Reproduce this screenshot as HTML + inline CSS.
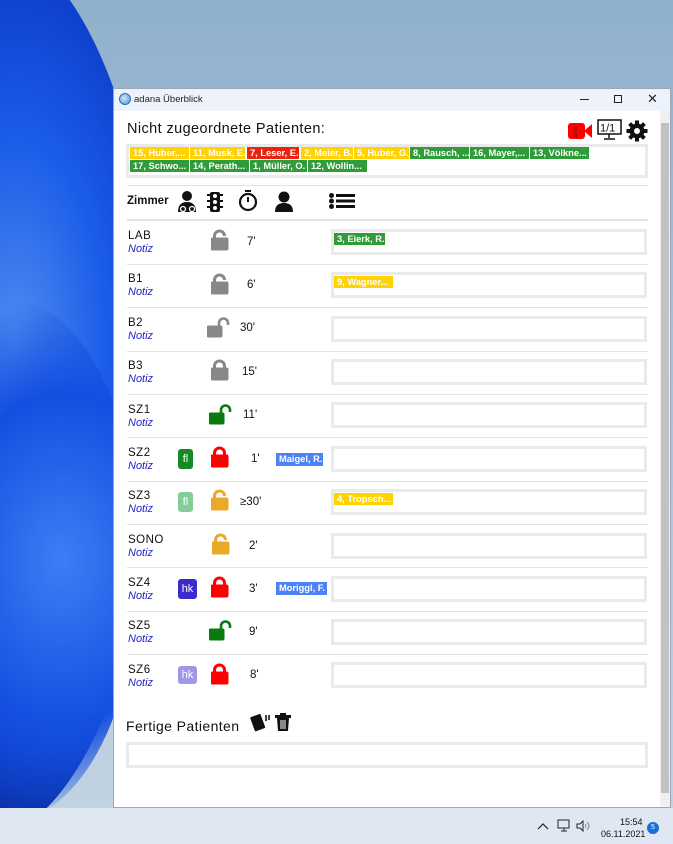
<!DOCTYPE html>
<html><head><meta charset="utf-8"><style>
*{margin:0;padding:0;box-sizing:border-box}
body{width:673px;height:844px;overflow:hidden;position:relative;font-family:"Liberation Sans","DejaVu Sans",sans-serif;
background:linear-gradient(180deg,#8fb0cc 0%,#a9c2d8 40%,#c3d3e2 100%)}
.bloom{position:absolute;left:-200px;top:-60px;width:360px;height:900px;border-radius:50%;
background:radial-gradient(ellipse at 60% 45%,#4f8cf0 0%,#1a5ce8 30%,#0c3cc8 55%,#0a2a90 75%,rgba(10,40,140,0) 78%)}
.bloom2{position:absolute;left:-120px;top:300px;width:260px;height:520px;border-radius:50%;
background:radial-gradient(ellipse at 70% 50%,#3b7ff5 0%,#1450e0 45%,rgba(20,60,200,0) 72%)}
.task{position:absolute;left:0;top:808px;width:673px;height:36px;background:#dfe8f2}
.win{position:absolute;left:113px;top:88px;width:558px;height:720px;background:#fff;border:1px solid #9aa8b8}
.tbar{position:absolute;left:0;top:0;width:556px;height:22px;background:#eef3fb;font-size:9.5px;color:#222}
.sb{position:absolute;left:546px;top:22px;width:10px;height:696px;background:#f0f0f0}
.sb i{position:absolute;left:1px;top:12px;width:8px;height:670px;background:#c2c2c2}
.a{position:absolute}
.chip{position:absolute;height:12px;font-size:9.3px;font-weight:bold;color:#fff;line-height:12px;padding-left:3px;white-space:nowrap;overflow:hidden;border-right:1px solid #fff}
.y{background:#ffd200}.g{background:#2e9c38}.r{background:#e8230f}.b{background:#4c82f5}
.line{position:absolute;left:13px;width:521px;height:1px;background:#e2e2e2}
.room{position:absolute;left:14px;font-size:11.5px;color:#111;letter-spacing:.5px}
.notiz{position:absolute;left:14px;font-size:11px;color:#2222cc;font-style:italic}
.drop{position:absolute;left:217px;width:316px;height:26px;border:3px solid #eaeaea}
.tm{position:absolute;font-size:11.5px;color:#111}
.badge{position:absolute;width:16px;height:20px;border-radius:3px;color:#fff;font-size:11px;text-align:center;line-height:20px}
</style></head><body>
<div class="bloom"></div><div class="bloom2"></div>
<div class="task">
<svg class="a" style="left:537px;top:14px" width="12" height="8"><path d="M1 7L6 2L11 7" stroke="#222" fill="none" stroke-width="1.2"/></svg>
<svg class="a" style="left:557px;top:11px" width="14" height="14"><rect x="1" y="1" width="11" height="8" fill="none" stroke="#222"/><path d="M4 12h6M7 9v3" stroke="#222"/></svg>
<svg class="a" style="left:576px;top:12px" width="14" height="12"><path d="M1 4h3l3-3v10L4 8H1z" fill="none" stroke="#222"/><path d="M9 4q2 2 0 4M11 2q4 4 0 8" stroke="#888" fill="none"/></svg>
<div class="a" style="left:620px;top:9px;font-size:9px;color:#111">15:54</div>
<div class="a" style="left:601px;top:21px;font-size:9px;color:#111">06.11.2021</div>
<div class="a" style="left:647px;top:14px;width:12px;height:12px;border-radius:6px;background:#1a6fd6;color:#fff;font-size:7px;text-align:center;line-height:12px">5</div>
</div>
<div class="win">
<div class="tbar">
<div class="a" style="left:5px;top:4px;width:12px;height:12px;border-radius:6px;background:radial-gradient(circle at 40% 40%,#cfe6ff,#4d94d8);border:1px solid #2d6fb0"></div>
<div class="a" style="left:20px;top:5px">adana Überblick</div>
<div class="a" style="left:466px;top:10px;width:9px;height:1px;background:#222"></div>
<div class="a" style="left:500px;top:6px;width:8px;height:8px;border:1px solid #222"></div>
<div class="a" style="left:533px;top:2px;font-size:13px">✕</div>
</div>
<div class="sb"><i></i></div>
<div class="a" style="left:13px;top:32px;font-size:14.5px;color:#111;letter-spacing:.4px">Nicht zugeordnete Patienten:</div>
<svg class="a" style="left:454px;top:33px" width="25" height="18"><rect x="0" y="1" width="17" height="16" rx="3" fill="#f00"/><path d="M16 9L24 2V16z" fill="#f00"/><text x="6" y="9" font-size="6" fill="#600">0</text><text x="6" y="15" font-size="6" fill="#600">5</text></svg>
<svg class="a" style="left:483px;top:30px" width="26" height="22"><rect x="1" y="1" width="23" height="14" fill="#fff" stroke="#111" stroke-width="1.5"/><text x="3" y="12.5" font-size="11" fill="#111" font-family="Liberation Sans">1/1</text><path d="M12 15v4M7 20h11" stroke="#111" stroke-width="1.5"/></svg>
<svg class="a" style="left:512px;top:31px" width="22" height="22" viewBox="0 0 22 22"><g fill="#111"><circle cx="11" cy="11" r="7.5"/><g id="t"><rect x="9" y="0.5" width="4" height="5"/><rect x="9" y="16.5" width="4" height="5"/></g><use href="#t" transform="rotate(45 11 11)"/><use href="#t" transform="rotate(90 11 11)"/><use href="#t" transform="rotate(135 11 11)"/></g><circle cx="11" cy="11" r="3" fill="#fff"/></svg>
<div class="a" style="left:12px;top:55px;width:522px;height:34px;border:3px solid #eaeaea"></div>
<div class="chip y" style="left:16px;top:58px;width:60px">15, Huber,...</div>
<div class="chip y" style="left:76px;top:58px;width:56px">11, Musk, E.</div>
<div class="chip r" style="left:133px;top:58px;width:53px">7, Leser, E.</div>
<div class="chip y" style="left:187px;top:58px;width:53px">2, Meier, B.</div>
<div class="chip y" style="left:240px;top:58px;width:56px">5, Huber, G.</div>
<div class="chip g" style="left:296px;top:58px;width:60px">8, Rausch, ...</div>
<div class="chip g" style="left:356px;top:58px;width:60px">16, Mayer,...</div>
<div class="chip g" style="left:416px;top:58px;width:60px">13, Völkne...</div>
<div class="chip g" style="left:16px;top:71px;width:60px">17, Schwo...</div>
<div class="chip g" style="left:76px;top:71px;width:60px">14, Perath...</div>
<div class="chip g" style="left:136px;top:71px;width:58px">1, Müller, O.</div>
<div class="chip g" style="left:194px;top:71px;width:60px">12, Wollin...</div>
<div class="line" style="top:96px"></div>
<div class="a" style="left:13px;top:106px;font-size:11.5px;font-weight:bold;color:#111">Zimmer</div>
<svg class="a" style="left:63px;top:101px" width="22" height="24"><circle cx="10" cy="6" r="5" fill="#111"/><path d="M1 22q0-10 9-10q9 0 9 10z" fill="#111"/><circle cx="6" cy="19" r="2.5" fill="none" stroke="#fff" stroke-width="1.3"/><circle cx="15" cy="19" r="2.5" fill="none" stroke="#fff" stroke-width="1.3"/></svg>
<svg class="a" style="left:93px;top:103px" width="16" height="20"><rect x="3" y="0" width="10" height="20" rx="2" fill="#111"/><path d="M0 3h3M0 9h3M0 15h3M13 3h3M13 9h3M13 15h3" stroke="#111" stroke-width="2"/><circle cx="8" cy="4" r="2" fill="#fff"/><circle cx="8" cy="10" r="2" fill="#fff"/><circle cx="8" cy="16" r="2" fill="#fff"/></svg>
<svg class="a" style="left:124px;top:101px" width="20" height="22"><rect x="7" y="0" width="6" height="2" fill="#111"/><circle cx="10" cy="12" r="8" fill="none" stroke="#111" stroke-width="2.2"/><path d="M10 7v5" stroke="#111" stroke-width="2"/></svg>
<svg class="a" style="left:160px;top:102px" width="20" height="21"><circle cx="10" cy="6" r="5.5" fill="#111"/><path d="M1 21q0-9 9-9q9 0 9 9z" fill="#111"/></svg>
<svg class="a" style="left:215px;top:104px" width="26" height="16"><g fill="#111"><circle cx="2.5" cy="2.5" r="2.5"/><circle cx="2.5" cy="8" r="2.5"/><circle cx="2.5" cy="13.5" r="2.5"/><rect x="7" y="1" width="19" height="3"/><rect x="7" y="6.5" width="19" height="3"/><rect x="7" y="12" width="19" height="3"/></g></svg>
<div class="line" style="top:130px;height:2px"></div>

<svg width="0" height="0" style="position:absolute">
<defs>
<g id="lk"><rect x="0" y="9" width="17" height="12" rx="1.5"/><path d="M3.5 10V7a5 5 0 0 1 10 0v3" fill="none" stroke-width="3"/></g>
<g id="ul"><rect x="0" y="9" width="17" height="12" rx="1.5"/><path d="M3.5 10V7a5 5 0 0 1 10 0" fill="none" stroke-width="3"/></g>
<g id="us"><rect x="0" y="10" width="15" height="11" rx="1.5"/><path d="M12 11V7a4.5 4.5 0 0 1 9 0v2" fill="none" stroke-width="2.6"/></g>
</defs></svg>

<!-- LAB -->
<div class="room" style="top:141px">LAB</div><div class="notiz" style="top:154px">Notiz</div>
<svg class="a" style="left:97px;top:140px" width="24" height="22" fill="#888" stroke="#888"><use href="#ul"/></svg>
<div class="tm" style="left:133px;top:147px">7'</div>
<div class="drop" style="top:140px"></div><div class="chip g" style="left:220px;top:144px;width:52px">3, Eierk, R.</div>
<div class="line" style="top:175px"></div>
<!-- B1 -->
<div class="room" style="top:184px">B1</div><div class="notiz" style="top:197px">Notiz</div>
<svg class="a" style="left:97px;top:184px" width="24" height="22" fill="#888" stroke="#888"><use href="#ul"/></svg>
<div class="tm" style="left:133px;top:190px">6'</div>
<div class="drop" style="top:183px"></div><div class="chip y" style="left:220px;top:187px;width:60px">9, Wagner...</div>
<div class="line" style="top:218px"></div>
<!-- B2 -->
<div class="room" style="top:228px">B2</div><div class="notiz" style="top:241px">Notiz</div>
<svg class="a" style="left:93px;top:227px" width="26" height="22" fill="#888" stroke="#888"><use href="#us"/></svg>
<div class="tm" style="left:126px;top:233px">30'</div>
<div class="drop" style="top:227px"></div>
<div class="line" style="top:262px"></div>
<!-- B3 -->
<div class="room" style="top:271px">B3</div><div class="notiz" style="top:284px">Notiz</div>
<svg class="a" style="left:97px;top:270px" width="24" height="22" fill="#888" stroke="#888"><use href="#lk"/></svg>
<div class="tm" style="left:128px;top:277px">15'</div>
<div class="drop" style="top:270px"></div>
<div class="line" style="top:305px"></div>
<!-- SZ1 -->
<div class="room" style="top:315px">SZ1</div><div class="notiz" style="top:328px">Notiz</div>
<svg class="a" style="left:95px;top:314px" width="26" height="22" fill="#0a7a10" stroke="#0a7a10"><use href="#us"/></svg>
<div class="tm" style="left:129px;top:320px">11'</div>
<div class="drop" style="top:313px"></div>
<div class="line" style="top:348px"></div>
<!-- SZ2 -->
<div class="room" style="top:358px">SZ2</div><div class="notiz" style="top:371px">Notiz</div>
<div class="badge" style="left:64px;top:360px;width:15px;background:#138a26">fl</div>
<svg class="a" style="left:97px;top:357px" width="24" height="22" fill="#f00" stroke="#f00"><use href="#lk"/></svg>
<div class="tm" style="left:137px;top:364px">1'</div>
<div class="chip b" style="left:162px;top:364px;width:48px;height:13px">Maigel, R.</div>
<div class="drop" style="top:357px"></div>
<div class="line" style="top:392px"></div>
<!-- SZ3 -->
<div class="room" style="top:401px">SZ3</div><div class="notiz" style="top:414px">Notiz</div>
<div class="badge" style="left:64px;top:403px;width:15px;background:#86cc98">fl</div>
<svg class="a" style="left:97px;top:400px" width="24" height="22" fill="#eaa926" stroke="#eaa926"><use href="#ul"/></svg>
<div class="tm" style="left:126px;top:407px">≥30'</div>
<div class="drop" style="top:400px"></div><div class="chip y" style="left:220px;top:404px;width:60px">4, Tropsch...</div>
<div class="line" style="top:435px"></div>
<!-- SONO -->
<div class="room" style="top:445px">SONO</div><div class="notiz" style="top:458px">Notiz</div>
<svg class="a" style="left:98px;top:444px" width="24" height="22" fill="#eaa926" stroke="#eaa926"><use href="#ul"/></svg>
<div class="tm" style="left:135px;top:451px">2'</div>
<div class="drop" style="top:444px"></div>
<div class="line" style="top:478px"></div>
<!-- SZ4 -->
<div class="room" style="top:488px">SZ4</div><div class="notiz" style="top:501px">Notiz</div>
<div class="badge" style="left:64px;top:490px;width:19px;background:#3a2ccc">hk</div>
<svg class="a" style="left:97px;top:487px" width="24" height="22" fill="#f00" stroke="#f00"><use href="#lk"/></svg>
<div class="tm" style="left:135px;top:494px">3'</div>
<div class="chip b" style="left:162px;top:493px;width:52px;height:13px">Moriggl, F.</div>
<div class="drop" style="top:487px"></div>
<div class="line" style="top:522px"></div>
<!-- SZ5 -->
<div class="room" style="top:531px">SZ5</div><div class="notiz" style="top:544px">Notiz</div>
<svg class="a" style="left:95px;top:530px" width="26" height="22" fill="#0a7a10" stroke="#0a7a10"><use href="#us"/></svg>
<div class="tm" style="left:135px;top:537px">9'</div>
<div class="drop" style="top:530px"></div>
<div class="line" style="top:565px"></div>
<!-- SZ6 -->
<div class="room" style="top:575px">SZ6</div><div class="notiz" style="top:588px">Notiz</div>
<div class="badge" style="left:64px;top:577px;width:19px;height:18px;line-height:18px;background:#9e98e6">hk</div>
<svg class="a" style="left:97px;top:574px" width="24" height="22" fill="#f00" stroke="#f00"><use href="#lk"/></svg>
<div class="tm" style="left:136px;top:580px">8'</div>
<div class="drop" style="top:573px"></div>

<div class="a" style="left:12px;top:629px;font-size:14px;color:#111;letter-spacing:.4px">Fertige Patienten</div>
<svg class="a" style="left:136px;top:623px" width="22" height="20"><rect x="2" y="3" width="11" height="15" rx="1" transform="rotate(-20 8 10)" fill="#111"/><path d="M16 3v6M19 3v5" stroke="#111" stroke-width="1.6"/></svg>
<svg class="a" style="left:161px;top:624px" width="16" height="18"><rect x="0" y="2" width="16" height="3" fill="#111"/><rect x="5" y="0" width="6" height="3" fill="#111"/><path d="M2 5h12l-1 13H3z" fill="#111"/><path d="M6 7v9M8 7v9M10 7v9" stroke="#fff" stroke-width="1"/></svg>
<div class="a" style="left:12px;top:653px;width:522px;height:26px;border:3px solid #eaeaea"></div>
</div>
</body></html>
